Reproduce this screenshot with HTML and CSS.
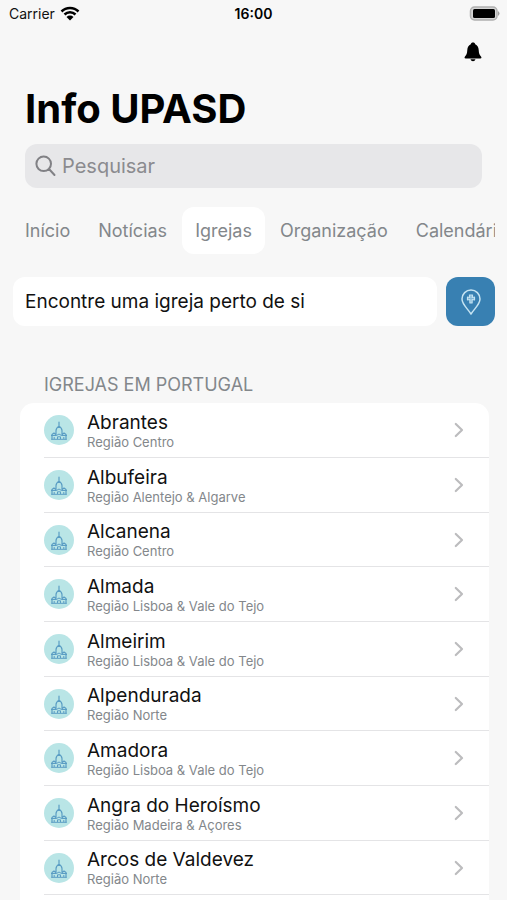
FILE: index.html
```html
<!DOCTYPE html>
<html lang="pt">
<head>
<meta charset="utf-8">
<meta name="viewport" content="width=device-width, initial-scale=1">
<title>Info UPASD</title>
<link rel="stylesheet" href="styles.css">
</head>
<body>
<svg class="defs" aria-hidden="true">
  <symbol id="church" viewBox="0 0 30 30">
    <circle cx="15" cy="15" r="15" fill="#b9e5e6"/>
    <path d="M15 7.200v4M12 20v-4.200c0-2.200 1.300-3.600 3-4.600 1.700 1 3 2.400 3 4.600V20M8 24v-4.500l2-1.500 1.800 1.500M22 24v-4.500L20 18l-1.800 1.500" fill="none" stroke="#5a9dc4" stroke-width="1.200" stroke-linecap="round" stroke-linejoin="round"/>
    <path d="M7 20.500h5.500L15 19l2.500 1.500H23M7.200 24.300h15.600M13.500 24v-2.200h3V24M10.200 24v-2M19.800 24v-2" fill="none" stroke="#5a9dc4" stroke-width="1"/>
  </symbol>
  <symbol id="chevron" viewBox="0 0 10 16">
    <path d="M1.800 2 8 8l-6.200 6" fill="none" stroke="#bcbcbe" stroke-width="2.200" stroke-linecap="round" stroke-linejoin="round"/>
  </symbol>
</svg>
<header class="status">
  <div class="carrier">Carrier
    <svg width="20" height="15" viewBox="0 0 20 15" aria-hidden="true"><path d="M1.500 5.500a12 12 0 0 1 17 0M4.500 8.500a8 8 0 0 1 11 0" fill="none" stroke="#000" stroke-width="2.500"/><path d="M6.500 11a5 5 0 0 1 7 0L10 14.500z"/></svg>
  </div>
  <time class="clock">16:00</time>
  <svg class="battery" width="31" height="15" viewBox="0 0 31 15" aria-hidden="true"><rect x="1.500" y="1" width="26.500" height="13" rx="4" fill="#d5d5d5" stroke="#b0b0b0" stroke-width="1.500"/><rect x="4" y="3" width="22" height="9" rx="1.500"/><path d="M29 5q3 2.500 0 5z" fill="#a0a0a0"/></svg>
</header>
<div class="toolbar">
  <button class="bell" aria-label="Notificações">
    <svg width="18" height="20" viewBox="0 0 18 20" aria-hidden="true"><path d="M9 .5c1.300 0 2 .7 2.200 1.700 2.300 1 3.300 3 3.500 5.800.2 3.500.8 4.800 2.300 6.500.8 1 .5 2-.7 2H1.700c-1.200 0-1.500-1-.7-2 1.500-1.700 2.100-3 2.300-6.500.2-2.800 1.200-4.800 3.500-5.800C7 1.200 7.700.5 9 .5zM6.500 17.300h5c-.4 1.300-1.300 2-2.500 2s-2.100-.7-2.500-2z"/></svg>
  </button>
</div>
<h1 class="title">Info UPASD</h1>
<label class="search">
  <svg width="22" height="22" viewBox="0 0 22 22" aria-hidden="true"><path d="M14 14 19.500 20M16 8.800a7.300 7.300 0 1 1-14.600 0 7.300 7.300 0 0 1 14.600 0z" fill="none" stroke="#818185" stroke-width="2" stroke-linecap="round"/></svg>
  <input type="search" placeholder="Pesquisar" aria-label="Pesquisar">
</label>
<nav class="tabs">
  <a href="#inicio">Início</a>
  <a href="#noticias">Notícias</a>
  <a href="#igrejas" class="active" aria-current="page">Igrejas</a>
  <a href="#organizacao">Organização</a>
  <a href="#calendario">Calendário</a>
</nav>
<main class="content">
  <div class="nearby">
    <p>Encontre uma igreja perto de si</p>
    <button aria-label="Procurar no mapa">
      <svg width="20" height="26" viewBox="0 0 20 26" aria-hidden="true"><path d="M10 25C7 20 1 15.500 1 10a9 9 0 0 1 18 0c0 5.500-6 10-9 15z" fill="none" stroke="#c5e3f2" stroke-width="1.500" stroke-linejoin="round"/><path d="M8.900 14V10.500L6.500 11V8l2.400.5L8.400 6h3.200l-.5 2.500 2.400-.5v3l-2.400-.5V14z" fill="#7fb6d8" stroke="#c5e3f2" stroke-width="1.200" stroke-linejoin="round"/></svg>
    </button>
  </div>
  <h2>IGREJAS EM PORTUGAL</h2>
  <ul class="churches">
    <li><a href="#abrantes"><svg class="badge"><use href="#church"/></svg><span class="place"><span class="name">Abrantes</span><span class="region">Região Centro</span></span><svg class="chevron"><use href="#chevron"/></svg></a></li>
    <li><a href="#albufeira"><svg class="badge"><use href="#church"/></svg><span class="place"><span class="name">Albufeira</span><span class="region">Região Alentejo &amp; Algarve</span></span><svg class="chevron"><use href="#chevron"/></svg></a></li>
    <li><a href="#alcanena"><svg class="badge"><use href="#church"/></svg><span class="place"><span class="name">Alcanena</span><span class="region">Região Centro</span></span><svg class="chevron"><use href="#chevron"/></svg></a></li>
    <li><a href="#almada"><svg class="badge"><use href="#church"/></svg><span class="place"><span class="name">Almada</span><span class="region">Região Lisboa &amp; Vale do Tejo</span></span><svg class="chevron"><use href="#chevron"/></svg></a></li>
    <li><a href="#almeirim"><svg class="badge"><use href="#church"/></svg><span class="place"><span class="name">Almeirim</span><span class="region">Região Lisboa &amp; Vale do Tejo</span></span><svg class="chevron"><use href="#chevron"/></svg></a></li>
    <li><a href="#alpendurada"><svg class="badge"><use href="#church"/></svg><span class="place"><span class="name">Alpendurada</span><span class="region">Região Norte</span></span><svg class="chevron"><use href="#chevron"/></svg></a></li>
    <li><a href="#amadora"><svg class="badge"><use href="#church"/></svg><span class="place"><span class="name">Amadora</span><span class="region">Região Lisboa &amp; Vale do Tejo</span></span><svg class="chevron"><use href="#chevron"/></svg></a></li>
    <li><a href="#angra"><svg class="badge"><use href="#church"/></svg><span class="place"><span class="name">Angra do Heroísmo</span><span class="region">Região Madeira &amp; Açores</span></span><svg class="chevron"><use href="#chevron"/></svg></a></li>
    <li><a href="#arcos"><svg class="badge"><use href="#church"/></svg><span class="place"><span class="name">Arcos de Valdevez</span><span class="region">Região Norte</span></span><svg class="chevron"><use href="#chevron"/></svg></a></li>
  </ul>
</main>
</body>
</html>
```
FILE: styles.css
```css
* { box-sizing: border-box; margin: 0; padding: 0; }

body {
  display: flex;
  flex-direction: column;
  min-height: 100vh;
  background: #f7f7f7;
  color: #111;
  font-family: Inter, "Liberation Sans", sans-serif;
}

svg { display: block; flex: none; }
a { color: inherit; text-decoration: none; }
button { border: 0; background: none; cursor: pointer; }
.defs { position: absolute; width: 0; height: 0; }

.status {
  display: grid;
  grid-template-columns: 1fr auto 1fr;
  align-items: center;
  height: 26px;
  padding: 0 7px;
  font-size: 14px;
}
.carrier { display: flex; align-items: center; gap: 5px; padding-left: 2px; }
.clock { color: #000; font-weight: 600; }
.battery { justify-self: end; }

.toolbar {
  display: flex;
  justify-content: flex-end;
  align-items: center;
  height: 52px;
  padding: 0 25px;
}
.bell { padding: 0; }

.title {
  margin: 6px 25px 11px;
  color: #000;
  font-size: 40px;
  font-weight: 700;
  line-height: 49px;
}

.search {
  display: flex;
  align-items: center;
  gap: 5px;
  height: 44px;
  margin: 0 25px;
  padding: 0 10px;
  border-radius: 12px;
  background: #e7e7e9;
}
.search input {
  flex: 1;
  min-width: 0;
  border: 0;
  outline: 0;
  background: none;
  color: #111;
  font: inherit;
  font-size: 20px;
}
.search input::placeholder { color: #8b8b8f; opacity: 1; }

.tabs {
  display: flex;
  gap: 2px;
  margin: 19px 12px 0;
  overflow: hidden;
  color: #83878b;
  font-size: 18px;
  line-height: 47px;
}
.tabs a { padding: 0 13px; border-radius: 12px; white-space: nowrap; }
.tabs .active { background: #fff; }

.content { display: flex; flex: 1; flex-direction: column; }

.nearby { display: flex; gap: 9px; margin: 23px 12px 0 13px; }
.nearby p {
  flex: 1;
  padding: 0 12px;
  border-radius: 12px;
  background: #fff;
  font-size: 19px;
  line-height: 49px;
}
.nearby button {
  display: grid;
  place-items: center;
  width: 49px;
  border-radius: 12px;
  background: #3880b2;
}

h2 {
  margin: 47px 44px 7px;
  color: #83878b;
  font-size: 18px;
  font-weight: 400;
  line-height: 23px;
}

.churches {
  flex: 1;
  margin: 0 18px 0 20px;
  border-radius: 14px 14px 0 0;
  background: #fff;
  list-style: none;
}
.churches li { padding-left: 24px; }
.churches a {
  display: flex;
  align-items: center;
  gap: 13px;
  min-height: 55px;
  padding-right: 25px;
  border-bottom: 1px solid #e4e4e6;
}
.churches li:nth-child(3n) a { min-height: 54px; }
.badge { width: 30px; height: 30px; }
.place { display: flex; flex: 1; flex-direction: column; }
.name { font-size: 19px; line-height: 23px; }
.region { color: #83878b; font-size: 13px; line-height: 16px; }
.chevron { width: 10px; height: 16px; }
```
